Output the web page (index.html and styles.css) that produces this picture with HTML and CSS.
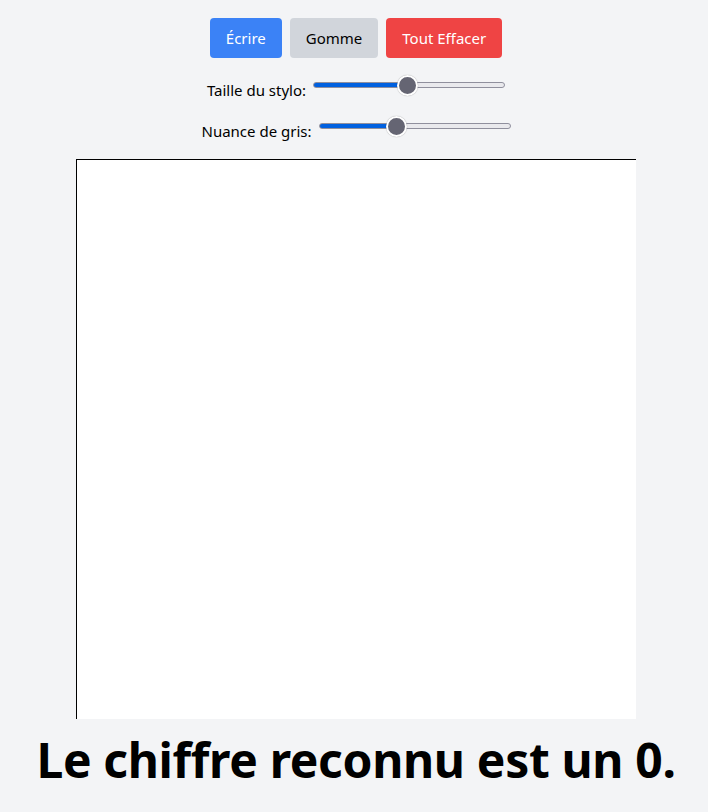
FILE: index.html
```html
<!DOCTYPE html>
<html lang="fr">
<head>
 <meta charset="UTF-8">
 <meta name="viewport" content="width=device-width, initial-scale=1.0">
 <title>Reconnaissance de chiffres</title>
 <link rel="stylesheet" href="styles.css">
</head>
<body>
 <div class="container">
 <div class="toolbar">
 <button class="btn btn-write">Écrire</button>
 <button class="btn btn-erase">Gomme</button>
 <button class="btn btn-clear">Tout Effacer</button>
 </div>

 <div class="control">
 <label for="penSize">Taille du stylo:</label>
 <input type="range" id="penSize" min="1" max="50" value="25" style="--fill: 50%">
 </div>
 <div class="control">
 <label for="gray">Nuance de gris:</label>
 <input type="range" id="gray" min="0" max="255" value="100" style="--fill: 40%">
 </div>

 <div class="board">
 <canvas id="canvas" width="560" height="560"></canvas>
 </div>

 <h1 class="result">Le chiffre reconnu est un 0.</h1>
 </div>
</body>
</html>
```

FILE: styles.css
```css
body {
    margin: 0;
    background-color: #f3f4f6;
    font-family: "Noto Sans", "Open Sans", sans-serif;
    color: #000;
 }

.container {
    display: flex;
    flex-direction: column;
    align-items: center;
    padding-top: 18px;
    padding-left: 4px;
 }

.toolbar {
    display: flex;
    gap: 8px;
 }

.btn {
    font-family: inherit;
    font-size: 15px;
    line-height: 24px;
    padding: 8px 16px;
    border: none;
    border-radius: 4px;
    cursor: pointer;
 }

.btn-write {
    background-color: #3b82f6;
    color: white;
 }

.btn-erase {
    background-color: #d1d5db;
    color: black;
 }

.btn-clear {
    background-color: #ef4444;
    color: white;
 }

.control {
    display: flex;
    align-items: center;
    height: 24px;
    margin-top: 18px;
    font-size: 15px;
 }

.control + .control {
    margin-top: 17px;
 }

.control label {
    margin-right: 7px;
    padding-top: 4px;
 }

input[type="range"] {
    -webkit-appearance: none;
    appearance: none;
    width: 192px;
    height: 22px;
    margin: 0 0 6px;
    background: transparent;
 }

input[type="range"]::-webkit-slider-runnable-track {
    height: 6px;
    border-radius: 3px;
    border: 1px solid #8f8f9d;
    background: linear-gradient(to right, #0060df var(--fill), #e9e9ed var(--fill));
    box-sizing: border-box;
 }

input[type="range"]::-webkit-slider-thumb {
    -webkit-appearance: none;
    width: 21px;
    height: 21px;
    margin-top: -8.5px;
    border-radius: 50%;
    background: #656573;
    border: 2px solid white;
    box-shadow: 0 0 1px rgba(0, 0, 0, 0.4);
    box-sizing: border-box;
 }

.board {
    margin-top: 18px;
    width: 560px;
    height: 560px;
    overflow: hidden;
 }

#canvas {
    display: block;
    background-color: white;
    border-top: 1px solid black;
    border-left: 1px solid black;
 }

.result {
    margin: 5px 0 0;
    font-size: 48px;
    font-weight: 700;
    line-height: 72px;
    letter-spacing: -0.35px;
 }
```
